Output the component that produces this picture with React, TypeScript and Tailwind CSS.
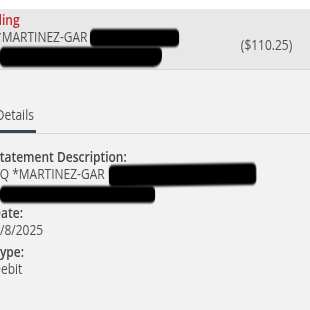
import React from "react";

const Redact = ({ className }: { className: string }) => (
  <span className={`block shrink-0 bg-black rounded-[5px] blur-[0.8px] ${className}`} />
);

export default function App() {
  return (
    <div className="w-[310px] h-[310px] overflow-hidden bg-[#f2f2f2]">
      <div
        className="w-[362px] h-[310px] origin-top-left scale-x-[0.857] text-[#4f4f4f] text-[14px]"
        style={{ fontFamily: '"Open Sans", Arial, sans-serif' }}
      >
        <div className="h-[9px] bg-white" />
        <div className="h-[61px] bg-[#e8e8e8] border-b border-[#d6d6d6] flex justify-between pr-[21px]">
          <div className="pt-[2px]">
            <div className="-ml-[32px] font-semibold leading-[17px] text-[#c4262e]">Pending</div>
            <div className="-ml-[28px] flex items-start h-[17px]">
              <span className="leading-[17px] whitespace-nowrap">SQ *MARTINEZ-GAR</span>
              <Redact className="ml-[3px] mt-[1px] w-[104px] h-[18px]" />
            </div>
            <Redact className="mt-[2px] w-[189px] h-[20px] rounded-br-[10px]" />
          </div>
          <div className="leading-[17px] pt-[27px]">($110.25)</div>
        </div>

        <div className="mt-[36px] border-b border-[#d6d6d6]">
          <div className="-ml-[5px] w-[47px] leading-[17px] pb-[7px] border-b-[3px] border-[#3a4452]">
            Details
          </div>
        </div>

        <div className="mt-[14px]">
          <div className="-ml-[8px] font-semibold leading-[17px] text-[#444]">Statement Description:</div>
          <div className="-ml-[8px] flex items-start h-[17px]">
            <span className="leading-[17px] whitespace-nowrap">SQ *MARTINEZ-GAR</span>
            <Redact className="ml-[5px] -mt-[1px] w-[172px] h-[22px] -rotate-[0.8deg]" />
          </div>
          <Redact className="mt-[4px] w-[181px] h-[17px]" />

          <div className="-ml-[9px] mt-[1px] font-semibold leading-[17px] text-[#444]">Date:</div>
          <div className="-ml-[8px] leading-[17px]">1/8/2025</div>

          <div className="-ml-[8px] mt-[5px] font-semibold leading-[17px] text-[#444]">Type:</div>
          <div className="-ml-[9px] leading-[17px]">Debit</div>
        </div>
      </div>
    </div>
  );
}
